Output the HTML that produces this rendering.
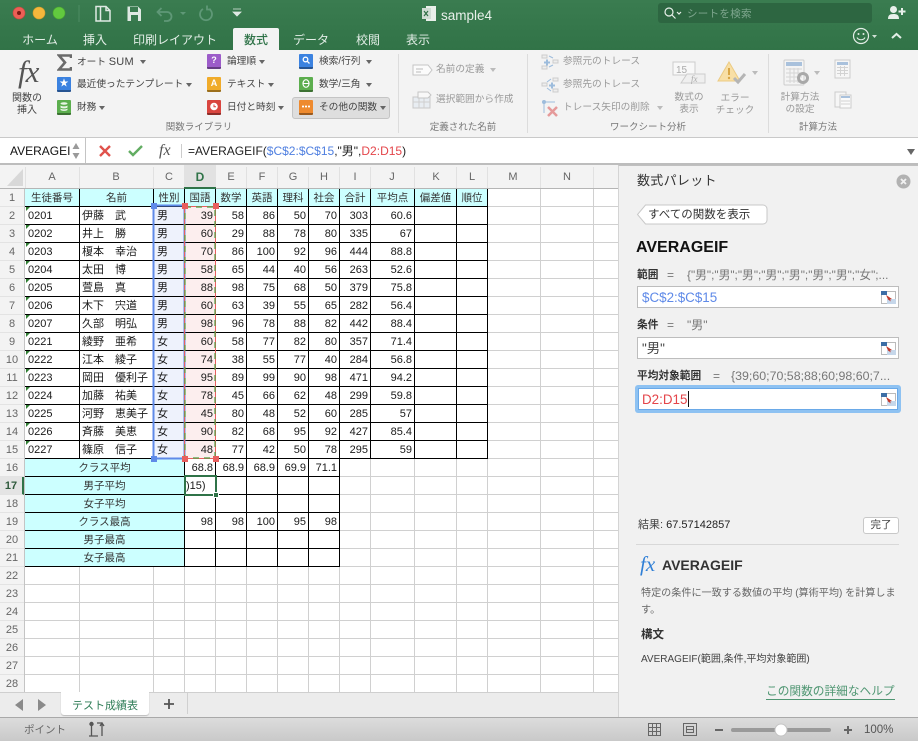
<!DOCTYPE html>
<html lang="ja"><head><meta charset="utf-8"><title>sample4</title>
<style>
*{box-sizing:border-box}
html,body{margin:0;padding:0;width:918px;height:741px;overflow:hidden;background:#fff}
body{font-family:"Liberation Sans","Noto Sans CJK JP",sans-serif;position:relative;color:#222}
.a{position:absolute;white-space:nowrap}
.c{position:absolute;white-space:nowrap;transform:translateX(-50%);text-align:center}
#top{position:absolute;left:0;top:0;width:918px;height:50px;background:linear-gradient(#3a7c50,#317347)}
.tab{position:absolute;top:31px;font-size:12px;line-height:18px;color:#e3eee7;transform:translateX(-50%);white-space:nowrap}
#ribbon{position:absolute;left:0;top:50px;width:918px;height:88px;background:#f3f3f3;border-bottom:1px solid #c9c9c9}
.r{position:absolute;font-size:9.7px;line-height:14px;color:#444;white-space:nowrap}
.g{color:#9a9a9a}
.lb{position:absolute;top:121px;font-size:9.5px;line-height:13px;color:#777;transform:translateX(-50%);white-space:nowrap}
.dn{position:absolute;width:0;height:0;border-left:3px solid transparent;border-right:3px solid transparent;border-top:4px solid #666}
.dn.g2{border-top-color:#bbb}
.sep{position:absolute;top:54px;height:79px;width:1px;background:#dcdcdc}
.ic{position:absolute;width:14px;height:15px;border-radius:1px;border-bottom:2px solid rgba(0,0,0,.35);color:#fff;font-size:9px;font-weight:bold;line-height:13px;text-align:center}
.ic svg{position:absolute;left:0;top:0}
#fb{position:absolute;left:0;top:138px;width:918px;height:27px;background:#fff;border-bottom:2px solid #bdbdbd}
#colhead{position:absolute;left:0;top:165px;width:618px;height:24px;background:#f3f3f3;border-bottom:1px solid #b5b5b5}
.ch{position:absolute;top:5px;font-size:11px;line-height:14px;color:#666;transform:translateX(-50%)}
.chl{position:absolute;top:2px;width:1px;height:21px;background:#e1e1e1}
#rowhead{position:absolute;left:0;top:189px;width:25px;height:503px;background:#f3f3f3;border-right:1px solid #c4c4c4;font-size:11px;color:#666;text-align:center}
#rowhead div{height:18px;line-height:18px;border-bottom:1px solid #e3e3e3}
#grid{position:absolute;left:25px;top:189px;width:593px;height:503px;background:repeating-linear-gradient(to bottom,#fff 0,#fff 17px,#d0d0d0 17px,#d0d0d0 18px)}
.vl{position:absolute;top:0;width:1px;height:503px;background:#d0d0d0}
table{position:absolute;border-collapse:separate;border-spacing:0;table-layout:fixed;font-size:11px}
td{border-right:1px solid #000;border-bottom:1px solid #000;height:18px;padding:0 2px 0 3px;line-height:16px;white-space:nowrap;overflow:hidden;color:#1a1a1a;text-align:right}
td.h{background:#ccffff;text-align:center;padding:0;font-size:10.5px;color:#333}
td.l{text-align:left}
td.n{text-align:left;padding-left:2px}
.tri{position:absolute;left:26px;width:0;height:0;border-top:4px solid #2f7d32;border-right:4px solid transparent}
#panel{position:absolute;left:618px;top:165px;width:300px;height:553px;background:#f1f1f1;border-left:1px solid #d4d4d4;border-top:1px solid #c0c0c0}
.inp{position:absolute;left:637px;width:262px;background:#fff;border:1px solid #bdbdbd;font-size:13.4px;padding-left:4px;white-space:nowrap}
.ref{position:absolute;left:881px;width:15px;height:13px}
.lbl{position:absolute;font-size:10.7px;font-weight:bold;color:#333;line-height:14px;white-space:nowrap}
.val{position:absolute;font-size:12px;color:#777;line-height:14px;white-space:nowrap}
#tabs{position:absolute;left:0;top:692px;width:618px;height:26px;background:#ececec;border-top:1px solid #cfcfcf}
#status{position:absolute;left:0;top:717px;width:918px;height:24px;background:linear-gradient(#dcdcdc,#c9c9c9);border-top:1px solid #a9a9a9}
</style></head><body>

<div id="top"></div>
<svg class="a" style="left:0;top:0" width="250" height="28">
<circle cx="19" cy="13" r="6" fill="#ec5f56" stroke="#c8473e" stroke-width=".6"/><circle cx="19" cy="13" r="2" fill="#7c1a14"/>
<circle cx="39" cy="13" r="6" fill="#f4b73c" stroke="#d49b2a" stroke-width=".6"/>
<circle cx="59" cy="13" r="6" fill="#62c93f" stroke="#4ba630" stroke-width=".6"/>
<line x1="79" y1="5" x2="79" y2="22" stroke="#4d8c63"/>
<path d="M96 6.500h10l4 4v10.500h-14z M100.500 6.500v14.500 M106 6.500v4h4" fill="none" stroke="#dfe9e3" stroke-width="1.500"/>
<path d="M127.500 6.500h10.500l3 3v11.500h-13.500z" fill="#dfe9e3"/><rect x="130" y="7" width="8" height="5" fill="#3a7b50"/><rect x="131" y="15" width="7" height="6" fill="#3a7b50"/>
<path d="M158 12h9a4.500 4.500 0 0 1 0 9h-3M161.500 8l-4 4 4 4" fill="none" stroke="#5f9877" stroke-width="1.800"/>
<path d="M180 12l3 3 3-3z" fill="#5f9877"/>
<path d="M203 9a6 6 0 1 0 6 0M207 5.500v4h4" fill="none" stroke="#5f9877" stroke-width="1.800"/>
<path d="M233 9h8M233 12l4 4 4-4z" fill="#dfe9e3" stroke="#dfe9e3" stroke-width=".8"/>
</svg>
<svg class="a" style="left:422px;top:6px" width="15" height="16"><rect x="4" y="0" width="10" height="15" fill="#e8efe9"/><rect x="0" y="2" width="9" height="11" fill="#cfdcd3"/><path d="M2 5l4 5M6 5l-4 5" stroke="#2f6f45" stroke-width="1.200"/></svg>
<div class="a" style="left:441px;top:7px;font-size:13.5px;line-height:18px;color:#e8f0ea">sample4</div>
<div class="a" style="left:658px;top:3px;width:214px;height:20px;background:#2d6641;border-radius:3px"></div>
<svg class="a" style="left:663px;top:6px" width="20" height="14"><circle cx="6" cy="6" r="4" fill="none" stroke="#e8f0ea" stroke-width="1.200"/><path d="M9 9l3.500 3.500M14 6l2 2 2-2" fill="none" stroke="#e8f0ea" stroke-width="1.200"/></svg>
<div class="a" style="left:687px;top:7px;font-size:10.5px;line-height:15px;color:#7fa78f;letter-spacing:.3px">シートを検索</div>
<svg class="a" style="left:887px;top:5px" width="20" height="15"><circle cx="6.500" cy="4.500" r="3.500" fill="#e8f0ea"/><path d="M1 14c0-4 2-5 5.500-5s5.500 1 5.500 5z" fill="#e8f0ea"/><path d="M15 3v7M11.500 6.500h7" stroke="#e8f0ea" stroke-width="2"/></svg>

<div class="tab" style="left:40px">ホーム</div>
<div class="tab" style="left:95px">挿入</div>
<div class="tab" style="left:175px">印刷レイアウト</div>
<div class="a" style="left:233px;top:28px;width:46px;height:23px;background:#f3f3f3;border-radius:2px 2px 0 0"></div>
<div class="tab" style="left:256px;color:#2f7348;font-weight:500">数式</div>
<div class="tab" style="left:311px">データ</div>
<div class="tab" style="left:368px">校閲</div>
<div class="tab" style="left:418px">表示</div>
<svg class="a" style="left:851px;top:27px" width="60" height="18"><circle cx="10" cy="9" r="7.500" fill="none" stroke="#e3eee7" stroke-width="1.200"/><circle cx="7.500" cy="7" r="1" fill="#e3eee7"/><circle cx="12.500" cy="7" r="1" fill="#e3eee7"/><path d="M6 10.500c1.500 3 6.500 3 8 0" fill="none" stroke="#e3eee7" stroke-width="1.100"/><path d="M21 8l2.500 3 2.500-3z" fill="#cfe0d5"/><path d="M41 11l4.500-4 4.500 4" fill="none" stroke="#e3eee7" stroke-width="2"/></svg>

<div id="ribbon"></div>
<div class="a" style="left:18px;top:54px;width:26px;font:italic 31px/36px 'Liberation Serif',serif;color:#555;letter-spacing:-1px">fx</div>
<div class="c" style="left:27px;top:93px;font-size:10px;line-height:12px;color:#444">関数の<br>挿入</div>

<svg class="a" style="left:57px;top:54px" width="15" height="17"><path d="M14 4V1.500H2L8 8.500 2 15.500H14V13" fill="none" stroke="#6a6a6a" stroke-width="2.600"/></svg>
<div class="r" style="left:77px;top:55px">オート <span style="font-size:11px;letter-spacing:.2px">SUM</span></div><div class="dn" style="left:140px;top:60px"></div>
<div class="ic" style="left:57px;top:77px;background:#3b82e0">★</div>
<div class="r" style="left:77px;top:78px">最近使ったテンプレート</div><div class="dn" style="left:186px;top:83px"></div>
<div class="ic" style="left:57px;top:100px;background:#5cae4e"><svg width="14" height="13"><ellipse cx="7" cy="3.500" rx="3.500" ry="1.300" fill="#e9f5e6"/><path d="M3.500 5.500c1 1.200 6 1.200 7 0v2c-1 1.200-6 1.200-7 0zM3.500 8.500c1 1.200 6 1.200 7 0v1.500c-1 1.200-6 1.200-7 0z" fill="#e9f5e6"/></svg></div>
<div class="r" style="left:77px;top:101px">財務</div><div class="dn" style="left:99px;top:106px"></div>

<div class="ic" style="left:207px;top:54px;background:#9c5cc9">?</div>
<div class="r" style="left:227px;top:55px">論理順</div><div class="dn" style="left:259px;top:60px"></div>
<div class="ic" style="left:207px;top:77px;background:#f0ab2a">A</div>
<div class="r" style="left:227px;top:78px">テキスト</div><div class="dn" style="left:268px;top:83px"></div>
<div class="ic" style="left:207px;top:100px;background:#d9453f"><svg width="14" height="13"><circle cx="7" cy="6.500" r="3.800" fill="#fff"/><path d="M7 4.500v2.300h2" fill="none" stroke="#d9453f"/></svg></div>
<div class="r" style="left:227px;top:101px">日付と時刻</div><div class="dn" style="left:278px;top:106px"></div>

<div class="ic" style="left:299px;top:54px;background:#3b82e0"><svg width="14" height="13"><circle cx="6.500" cy="5.500" r="2.300" fill="none" stroke="#fff" stroke-width="1.300"/><path d="M8.300 7.300l2.200 2.200" stroke="#fff" stroke-width="1.300"/></svg></div>
<div class="r" style="left:319px;top:55px">検索/行列</div><div class="dn" style="left:366px;top:60px"></div>
<div class="ic" style="left:299px;top:77px;background:#5cae4e"><svg width="14" height="13"><ellipse cx="7" cy="6.500" rx="3" ry="3.800" fill="none" stroke="#fff" stroke-width="1.200"/><path d="M4 6.500h6" stroke="#fff"/></svg></div>
<div class="r" style="left:319px;top:78px">数学/三角</div><div class="dn" style="left:366px;top:83px"></div>
<div class="a" style="left:292px;top:97px;width:98px;height:22px;background:#dedede;border:1px solid #c4c4c4;border-radius:3px"></div>
<div class="ic" style="left:299px;top:100px;background:#ee8a2e"><svg width="14" height="13"><path d="M3 6.500h2M6 6.500h2M9 6.500h2" stroke="#fff" stroke-width="1.800"/></svg></div>
<div class="r" style="left:319px;top:101px">その他の関数</div><div class="dn" style="left:380px;top:106px"></div>
<div class="lb" style="left:199px">関数ライブラリ</div>
<div class="sep" style="left:398px"></div>

<svg class="a" style="left:412px;top:64px" width="22" height="12"><path d="M1 1h15l4 5-4 5H1z" fill="#fbfbfb" stroke="#c5c5c5"/><path d="M4 5h7M4 8h5" stroke="#bbb"/></svg>
<div class="r g" style="left:436px;top:63px">名前の定義</div><div class="dn g2" style="left:490px;top:68px"></div>
<svg class="a" style="left:412px;top:91px" width="22" height="18"><rect x="1" y="6" width="17" height="11" fill="#e8edf2" stroke="#c8c8c8"/><path d="M1 11h17M7 6v11M12 6v11" stroke="#cfcfcf"/><path d="M6 1h10l3 3-3 3H6z" fill="#f8f8f8" stroke="#c5c5c5"/></svg>
<div class="r g" style="left:436px;top:93px">選択範囲から作成</div>
<div class="lb" style="left:463px">定義された名前</div>
<div class="sep" style="left:527px"></div>

<svg class="a" style="left:541px;top:54px" width="18" height="16"><rect x="1" y="1" width="5" height="3" fill="#eee" stroke="#ccc"/><rect x="12" y="6" width="5" height="3" fill="#eee" stroke="#ccc"/><rect x="1" y="12" width="5" height="3" fill="#eee" stroke="#ccc"/><path d="M3 8.500h6M6 5.500v6" stroke="#9dbcdc" stroke-width="2"/><path d="M8 2l4 2M8 13l4-2" stroke="#9dbcdc"/></svg>
<div class="r g" style="left:563px;top:55px">参照元のトレース</div>
<svg class="a" style="left:541px;top:77px" width="18" height="16"><rect x="12" y="1" width="5" height="3" fill="#eee" stroke="#ccc"/><rect x="1" y="6" width="5" height="3" fill="#eee" stroke="#ccc"/><rect x="12" y="12" width="5" height="3" fill="#eee" stroke="#ccc"/><path d="M8 8.500h6M11 5.500v6" stroke="#9dbcdc" stroke-width="2"/><path d="M6 5l4-3M6 11l4 3" stroke="#9dbcdc"/></svg>
<div class="r g" style="left:563px;top:78px">参照先のトレース</div>
<svg class="a" style="left:541px;top:99px" width="18" height="18"><circle cx="3" cy="3" r="2" fill="#9dbcdc"/><path d="M3 3h11M3 3v11" stroke="#9dbcdc"/><path d="M7 8l9 9M16 8l-9 9" stroke="#e59a9a" stroke-width="2.500"/></svg>
<div class="r g" style="left:563px;top:101px">トレース矢印の削除</div><div class="dn g2" style="left:657px;top:106px"></div>
<svg class="a" style="left:672px;top:61px" width="34" height="24"><rect x="1" y="1" width="22" height="13" fill="#f8f8f8" stroke="#ccc"/><path d="M9 22l6-9h18v9z" fill="#efefef" stroke="#ccc"/><text x="4" y="12" font-size="10" fill="#aaa" font-family="Liberation Sans">15</text><text x="19" y="21" font-size="9" font-style="italic" fill="#aaa" font-family="Liberation Serif">fx</text></svg>
<div class="c g" style="left:689px;top:92px;font-size:9.700px;line-height:12px">数式の<br>表示</div>
<svg class="a" style="left:717px;top:61px" width="30" height="26"><path d="M12 1L1 20h22z" fill="#f8dfa6" stroke="#eccb83"/><path d="M12 7v7" stroke="#d9a645" stroke-width="2"/><circle cx="12" cy="17" r="1.200" fill="#d9a645"/><path d="M17 17l4 4 7-8" fill="none" stroke="#b5b5b5" stroke-width="3"/></svg>
<div class="dn g2" style="left:752px;top:71px"></div>
<div class="c g" style="left:735px;top:93px;font-size:9.700px;line-height:12px">エラー<br>チェック</div>
<div class="lb" style="left:648px">ワークシート分析</div>
<div class="sep" style="left:768px"></div>

<svg class="a" style="left:783px;top:59px" width="28" height="28"><rect x="1" y="1" width="20" height="25" rx="1" fill="#f4f4f4" stroke="#ccc"/><rect x="3" y="3" width="16" height="4" fill="#a9c1dc"/><path d="M3 10h16M3 14h16M3 18h16M3 22h16M7 9v15M11 9v15M15 9v15" stroke="#d5d5d5"/><circle cx="20" cy="19" r="4.500" fill="none" stroke="#a8a8a8" stroke-width="3"/></svg>
<div class="dn g2" style="left:814px;top:71px"></div>
<div class="c g" style="left:800px;top:92px;font-size:9.700px;line-height:12px">計算方法<br>の設定</div>
<svg class="a" style="left:834px;top:59px" width="18" height="21"><rect x="1" y="1" width="15" height="18" fill="#f6f6f6" stroke="#ccc"/><rect x="3" y="3" width="11" height="3" fill="#a9c1dc"/><path d="M3 8.500h11M3 11.500h11M3 14.500h11M6.500 7v10M10.500 7v10" stroke="#d2d2d2"/></svg>
<svg class="a" style="left:834px;top:91px" width="18" height="18"><rect x="1" y="1" width="11" height="15" fill="#f6f6f6" stroke="#ccc"/><rect x="6" y="4" width="11" height="13" fill="#fafafa" stroke="#ccc"/><rect x="7" y="5" width="9" height="2" fill="#a9c1dc"/><path d="M7 10h9M7 13h9" stroke="#d2d2d2"/></svg>
<div class="lb" style="left:818px">計算方法</div>

<div id="fb"></div>
<div class="a" style="left:0;top:138px;width:86px;height:25px;border-right:1px solid #c4c4c4;background:#fff"></div>
<div class="a" style="left:10px;top:144px;font-size:12px;line-height:15px;color:#111">AVERAGEI</div>
<svg class="a" style="left:71px;top:142px" width="10" height="18"><path d="M5 1l3.500 6h-7zM5 17l3.500-6h-7z" fill="#9a9a9a"/></svg>
<svg class="a" style="left:97px;top:143px" width="50" height="16"><path d="M3 3l10 10M13 3L3 13" stroke="#e0524c" stroke-width="2.400"/><path d="M32 8l4 4 9-9" fill="none" stroke="#62ad62" stroke-width="2.400"/></svg>
<div class="a" style="left:159px;top:141px;font:italic 16px/20px 'Liberation Serif',serif;color:#555">fx</div>
<div class="a" style="left:181px;top:144px;width:1px;height:14px;background:#ccc"></div>
<div class="a" style="left:188px;top:143px;font-size:12px;line-height:16px;color:#222">=AVERAGEIF(<span style="color:#4f7fe0">$C$2:$C$15</span>,"男",<span style="color:#e4454a">D2:D15</span>)</div>
<div class="dn" style="left:907px;top:149px;border-left-width:4px;border-right-width:4px;border-top-width:6px"></div>

<div id="colhead">
<svg class="a" style="left:6px;top:3px" width="18" height="19"><path d="M17 1v17H1z" fill="#d8d8d8"/></svg>
<div class="chl" style="left:25px"></div><div class="chl" style="left:79px"></div><div class="chl" style="left:153px"></div><div class="chl" style="left:184px"></div><div class="chl" style="left:215px"></div><div class="chl" style="left:246px"></div><div class="chl" style="left:277px"></div><div class="chl" style="left:308px"></div><div class="chl" style="left:339px"></div><div class="chl" style="left:370px"></div><div class="chl" style="left:414px"></div><div class="chl" style="left:456px"></div><div class="chl" style="left:487px"></div><div class="chl" style="left:540px"></div><div class="chl" style="left:593px"></div>
<div class="a" style="left:184px;top:0;width:32px;height:24px;background:#e2e2e2;border-bottom:2px solid #2f7348"></div>
<div class="ch" style="left:52px">A</div><div class="ch" style="left:116px">B</div><div class="ch" style="left:169px">C</div>
<div class="ch" style="left:200px;font-weight:bold;font-size:12px;color:#2f7348">D</div>
<div class="ch" style="left:231px">E</div><div class="ch" style="left:262px">F</div><div class="ch" style="left:293px">G</div><div class="ch" style="left:324px">H</div><div class="ch" style="left:355px">I</div><div class="ch" style="left:392px">J</div><div class="ch" style="left:436px">K</div><div class="ch" style="left:472px">L</div><div class="ch" style="left:513px">M</div><div class="ch" style="left:567px">N</div>
</div>

<div id="rowhead">
<div>1</div><div>2</div><div>3</div><div>4</div><div>5</div><div>6</div><div>7</div><div>8</div><div>9</div><div>10</div><div>11</div><div>12</div><div>13</div><div>14</div><div>15</div><div>16</div><div style="font-weight:bold;color:#2f5a3c;background:#e4e4e4;border-right:2px solid #2f7348">17</div><div>18</div><div>19</div><div>20</div><div>21</div><div>22</div><div>23</div><div>24</div><div>25</div><div>26</div><div>27</div><div>28</div>
</div>

<div id="grid">
<div class="vl" style="left:54px"></div><div class="vl" style="left:128px"></div><div class="vl" style="left:159px"></div><div class="vl" style="left:190px"></div><div class="vl" style="left:221px"></div><div class="vl" style="left:252px"></div><div class="vl" style="left:283px"></div><div class="vl" style="left:314px"></div><div class="vl" style="left:345px"></div><div class="vl" style="left:389px"></div><div class="vl" style="left:431px"></div><div class="vl" style="left:462px"></div><div class="vl" style="left:515px"></div><div class="vl" style="left:568px"></div>
</div>

<table style="left:25px;top:189px;width:463px">
<colgroup><col style="width:55px"><col style="width:74px"><col style="width:31px"><col style="width:31px"><col style="width:31px"><col style="width:31px"><col style="width:31px"><col style="width:31px"><col style="width:31px"><col style="width:44px"><col style="width:42px"><col style="width:31px"></colgroup>
<tr><td class="h">生徒番号</td><td class="h">名前</td><td class="h">性別</td><td class="h">国語</td><td class="h">数学</td><td class="h">英語</td><td class="h">理科</td><td class="h">社会</td><td class="h">合計</td><td class="h">平均点</td><td class="h">偏差値</td><td class="h">順位</td></tr>
<tr><td class="l">0201</td><td class="n">伊藤　武</td><td class="l" style="background:#eef2fc">男</td><td style="background:#fceeee">39</td><td>58</td><td>86</td><td>50</td><td>70</td><td>303</td><td>60.6</td><td></td><td></td></tr>
<tr><td class="l">0202</td><td class="n">井上　勝</td><td class="l" style="background:#eef2fc">男</td><td style="background:#fceeee">60</td><td>29</td><td>88</td><td>78</td><td>80</td><td>335</td><td>67</td><td></td><td></td></tr>
<tr><td class="l">0203</td><td class="n">榎本　幸治</td><td class="l" style="background:#eef2fc">男</td><td style="background:#fceeee">70</td><td>86</td><td>100</td><td>92</td><td>96</td><td>444</td><td>88.8</td><td></td><td></td></tr>
<tr><td class="l">0204</td><td class="n">太田　博</td><td class="l" style="background:#eef2fc">男</td><td style="background:#fceeee">58</td><td>65</td><td>44</td><td>40</td><td>56</td><td>263</td><td>52.6</td><td></td><td></td></tr>
<tr><td class="l">0205</td><td class="n">萱島　真</td><td class="l" style="background:#eef2fc">男</td><td style="background:#fceeee">88</td><td>98</td><td>75</td><td>68</td><td>50</td><td>379</td><td>75.8</td><td></td><td></td></tr>
<tr><td class="l">0206</td><td class="n">木下　宍道</td><td class="l" style="background:#eef2fc">男</td><td style="background:#fceeee">60</td><td>63</td><td>39</td><td>55</td><td>65</td><td>282</td><td>56.4</td><td></td><td></td></tr>
<tr><td class="l">0207</td><td class="n">久部　明弘</td><td class="l" style="background:#eef2fc">男</td><td style="background:#fceeee">98</td><td>96</td><td>78</td><td>88</td><td>82</td><td>442</td><td>88.4</td><td></td><td></td></tr>
<tr><td class="l">0221</td><td class="n">綾野　亜希</td><td class="l" style="background:#eef2fc">女</td><td style="background:#fceeee">60</td><td>58</td><td>77</td><td>82</td><td>80</td><td>357</td><td>71.4</td><td></td><td></td></tr>
<tr><td class="l">0222</td><td class="n">江本　綾子</td><td class="l" style="background:#eef2fc">女</td><td style="background:#fceeee">74</td><td>38</td><td>55</td><td>77</td><td>40</td><td>284</td><td>56.8</td><td></td><td></td></tr>
<tr><td class="l">0223</td><td class="n">岡田　優利子</td><td class="l" style="background:#eef2fc">女</td><td style="background:#fceeee">95</td><td>89</td><td>99</td><td>90</td><td>98</td><td>471</td><td>94.2</td><td></td><td></td></tr>
<tr><td class="l">0224</td><td class="n">加藤　祐美</td><td class="l" style="background:#eef2fc">女</td><td style="background:#fceeee">78</td><td>45</td><td>66</td><td>62</td><td>48</td><td>299</td><td>59.8</td><td></td><td></td></tr>
<tr><td class="l">0225</td><td class="n">河野　恵美子</td><td class="l" style="background:#eef2fc">女</td><td style="background:#fceeee">45</td><td>80</td><td>48</td><td>52</td><td>60</td><td>285</td><td>57</td><td></td><td></td></tr>
<tr><td class="l">0226</td><td class="n">斉藤　美恵</td><td class="l" style="background:#eef2fc">女</td><td style="background:#fceeee">90</td><td>82</td><td>68</td><td>95</td><td>92</td><td>427</td><td>85.4</td><td></td><td></td></tr>
<tr><td class="l">0227</td><td class="n">篠原　信子</td><td class="l" style="background:#eef2fc">女</td><td style="background:#fceeee">48</td><td>77</td><td>42</td><td>50</td><td>78</td><td>295</td><td>59</td><td></td><td></td></tr>
</table>
<table style="left:25px;top:459px;width:315px">
<colgroup><col style="width:160px"><col style="width:31px"><col style="width:31px"><col style="width:31px"><col style="width:31px"><col style="width:31px"></colgroup>
<tr><td class="h">クラス平均</td><td>68.8</td><td>68.9</td><td>68.9</td><td>69.9</td><td>71.1</td></tr>
<tr><td class="h">男子平均</td><td class="l" style="padding-left:1px">)15)</td><td></td><td></td><td></td><td></td></tr>
<tr><td class="h">女子平均</td><td></td><td></td><td></td><td></td><td></td></tr>
<tr><td class="h">クラス最高</td><td>98</td><td>98</td><td>100</td><td>95</td><td>98</td></tr>
<tr><td class="h">男子最高</td><td></td><td></td><td></td><td></td><td></td></tr>
<tr><td class="h">女子最高</td><td></td><td></td><td></td><td></td><td></td></tr>
</table>
<div class="tri" style="top:207px"></div><div class="tri" style="top:225px"></div><div class="tri" style="top:243px"></div><div class="tri" style="top:261px"></div><div class="tri" style="top:279px"></div><div class="tri" style="top:297px"></div><div class="tri" style="top:315px"></div><div class="tri" style="top:333px"></div><div class="tri" style="top:351px"></div><div class="tri" style="top:369px"></div><div class="tri" style="top:387px"></div><div class="tri" style="top:405px"></div><div class="tri" style="top:423px"></div><div class="tri" style="top:441px"></div>

<!-- range highlights -->
<svg class="a" style="left:148px;top:200px" width="75" height="266">
<rect x="5.500" y="5.500" width="31" height="253" fill="none" stroke="#5f8ae8" stroke-width="2"/>
<rect x="36.500" y="6.500" width="31" height="252" fill="none" stroke="#e85f5f" stroke-width="1"/>
<rect x="37" y="7" width="30" height="251" fill="none" stroke="#4fa044" stroke-width="1.200" stroke-dasharray="6 5"/>
<rect x="3" y="3" width="6" height="6" fill="#5f8ae8"/><rect x="3" y="256" width="6" height="6" fill="#5f8ae8"/>
<rect x="34" y="3" width="6" height="6" fill="#e85f5f"/><rect x="65" y="3" width="6" height="6" fill="#e85f5f"/>
<rect x="34" y="256" width="6" height="6" fill="#e85f5f"/><rect x="65" y="256" width="6" height="6" fill="#e85f5f"/>
</svg>
<div class="a" style="left:184px;top:475px;width:33px;height:21px;border:2px solid #2f7348"></div>
<div class="a" style="left:213px;top:492px;width:6px;height:6px;background:#2f7348;border:1px solid #fff"></div>

<div id="panel"></div>
<div class="a" style="left:637px;top:172px;font-size:13px;line-height:18px;color:#333;letter-spacing:.3px">数式パレット</div>
<svg class="a" style="left:896px;top:174px" width="15" height="15"><circle cx="7.500" cy="7.500" r="7" fill="#b2b2b2"/><path d="M5 5l5 5M10 5l-5 5" stroke="#f1f1f1" stroke-width="1.800"/></svg>
<svg class="a" style="left:636px;top:204px" width="133" height="23"><path d="M9.500 1H127a4 4 0 0 1 4 4v11a4 4 0 0 1-4 4H9.500L1.500 10.500z" fill="#fff" stroke="#c8c8c8"/></svg>
<div class="a" style="left:648px;top:207px;font-size:11.500px;line-height:16px;color:#333">すべての関数を表示</div>
<div class="a" style="left:636px;top:238px;font-size:16px;font-weight:bold;line-height:19px;color:#111">AVERAGEIF</div>

<div class="lbl" style="left:637px;top:268px">範囲</div><div class="val" style="left:667px;top:268px">=</div>
<div class="val" style="left:687px;top:268px;font-size:11.800px">{"男";"男";"男";"男";"男";"男";"男";"女";...</div>
<div class="inp" style="top:286px;height:22px;line-height:22px;color:#5f8ae8">$C$2:$C$15</div>
<div class="lbl" style="left:637px;top:318px">条件</div><div class="val" style="left:667px;top:318px">=</div>
<div class="val" style="left:687px;top:318px">"男"</div>
<div class="inp" style="top:337px;height:22px;line-height:22px;color:#444">"男"</div>
<div class="lbl" style="left:637px;top:369px">平均対象範囲</div><div class="val" style="left:713px;top:369px">=</div>
<div class="val" style="left:731px;top:369px;font-size:12.400px">{39;60;70;58;88;60;98;60;7...</div>
<div class="a" style="left:635px;top:385px;width:266px;height:28px;background:#8ec2f2;border-radius:3px"></div>
<div class="inp" style="left:638px;top:388px;width:260px;height:22px;line-height:21px;padding-left:3px;color:#e4454a;border:1px solid #6aa9e8">D2:D15<span style="display:inline-block;width:1px;height:16px;background:#111;vertical-align:-3px;margin-left:1px"></span></div>
<svg class="ref" style="top:291px" viewBox="0 0 15 13"><rect x=".5" y=".5" width="14" height="12" fill="#fff" stroke="#bbb"/><rect x="0" y="0" width="6" height="4" fill="#3d6ea5"/><rect x="6" y="8" width="9" height="5" fill="#c6d7ea"/><path d="M5 4l6 4-2 .5 1 2-3-2z" fill="#c0392b"/></svg>
<svg class="ref" style="top:342px" viewBox="0 0 15 13"><rect x=".5" y=".5" width="14" height="12" fill="#fff" stroke="#bbb"/><rect x="0" y="0" width="6" height="4" fill="#3d6ea5"/><rect x="6" y="8" width="9" height="5" fill="#c6d7ea"/><path d="M5 4l6 4-2 .5 1 2-3-2z" fill="#c0392b"/></svg>
<svg class="ref" style="top:393px" viewBox="0 0 15 13"><rect x=".5" y=".5" width="14" height="12" fill="#fff" stroke="#bbb"/><rect x="0" y="0" width="6" height="4" fill="#3d6ea5"/><rect x="6" y="8" width="9" height="5" fill="#c6d7ea"/><path d="M5 4l6 4-2 .5 1 2-3-2z" fill="#c0392b"/></svg>

<div class="a" style="left:638px;top:518px;font-size:11px;line-height:15px;color:#444">結果: <span style="color:#222">67.57142857</span></div>
<div class="a" style="left:863px;top:517px;width:36px;height:17px;background:#fff;border:1px solid #c8c8c8;border-radius:3px;text-align:center;font-size:10.500px;line-height:15px;color:#444">完了</div>
<div class="a" style="left:636px;top:544px;width:263px;height:1px;background:#d8d8d8"></div>
<div class="a" style="left:640px;top:552px;font:italic 21px/24px 'Liberation Serif',serif;color:#2f7fd6">fx</div>
<div class="a" style="left:662px;top:556px;font-size:14px;font-weight:bold;line-height:18px;color:#333">AVERAGEIF</div>
<div class="a" style="left:641px;top:585px;font-size:10.100px;line-height:17px;color:#666">特定の条件に一致する数値の平均 (算術平均) を計算しま<br>す。</div>
<div class="a" style="left:641px;top:627px;font-size:11.500px;font-weight:bold;line-height:16px;color:#333">構文</div>
<div class="a" style="left:641px;top:652px;font-size:10px;line-height:15px;color:#444">AVERAGEIF(範囲,条件,平均対象範囲)</div>
<div class="a" style="left:766px;top:685px;font-size:11.700px;line-height:14px;color:#4f9672;border-bottom:1px solid #4f9672">この関数の詳細なヘルプ</div>

<div id="tabs">
<svg class="a" style="left:12px;top:5px" width="36" height="14"><path d="M11 1v12L3 7zM26 1v12l8-6z" fill="#8a8a8a"/></svg>
<div class="a" style="left:61px;top:-1px;width:88px;height:23px;background:#fff;border-radius:0 0 3px 3px;box-shadow:0 1px 1px #bbb;text-align:center;font-size:11px;line-height:28px;color:#2f7d57">テスト成績表</div>
<svg class="a" style="left:162px;top:4px" width="14" height="14"><path d="M7 2v10M2 7h10" stroke="#555" stroke-width="1.800"/></svg>
<div class="a" style="left:187px;top:0;width:1px;height:21px;background:#d0d0d0"></div>
</div>

<div id="status">
<div class="a" style="left:24px;top:5px;font-size:10.500px;line-height:15px;color:#666">ポイント</div>
<svg class="a" style="left:88px;top:3px" width="18" height="18"><circle cx="3.500" cy="3" r="2.200" fill="#555"/><path d="M3.500 5v10M1 15h9M9 2h5v13M12 5l2-3 2 3" fill="none" stroke="#555" stroke-width="1.300"/></svg>
<svg class="a" style="left:647px;top:3px" width="52" height="16"><path d="M1.500 2.500h12v12h-12zM1.500 6.500h12M1.500 10.500h12M5.500 2.500v12M9.500 2.500v12" fill="none" stroke="#666"/><path d="M36.500 2.500h13v12h-13zM39.500 5.500h7v6h-7zM40 8.500h6" fill="none" stroke="#666"/></svg>
<svg class="a" style="left:714px;top:3px" width="140" height="18"><path d="M1 9h8M130 9h8M134 5v8" stroke="#666" stroke-width="2"/><rect x="17" y="7" width="100" height="4" rx="2" fill="#9a9a9a"/><circle cx="67" cy="9" r="6" fill="#fff" stroke="#c4c4c4"/></svg>
<div class="a" style="left:864px;top:5px;font-size:11.500px;line-height:15px;color:#555">100%</div>
</div>
</body></html>
